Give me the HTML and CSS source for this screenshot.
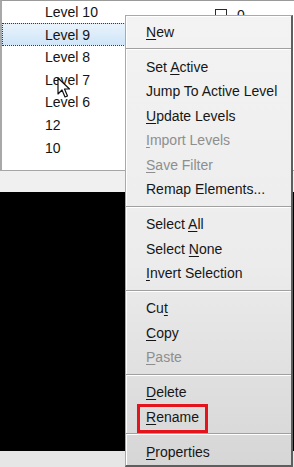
FILE: index.html
```html
<!DOCTYPE html>
<html>
<head>
<meta charset="utf-8">
<link rel="stylesheet" href="styles.css">
</head>
<body>
<div class="screen">
  <div class="list">
    <div class="row"><span class="name">Level 10</span><span class="check"></span><span class="val">0</span></div>
    <div class="row selected"><span class="name">Level 9</span></div>
    <div class="row"><span class="name">Level 8</span></div>
    <div class="row"><span class="name">Level 7</span></div>
    <div class="row"><span class="name">Level 6</span></div>
    <div class="row"><span class="name">12</span></div>
    <div class="row"><span class="name">10</span></div>
  </div>
  <div class="band"></div>
  <div class="canvas"></div>
  <div class="band bottom"></div>

  <ul class="menu">
    <li><u>N</u>ew</li>
    <li class="sep"></li>
    <li>Set <u>A</u>ctive</li>
    <li>Jump To Active Level</li>
    <li><u>U</u>pdate Levels</li>
    <li class="off"><u>I</u>mport Levels</li>
    <li class="off"><u>S</u>ave Filter</li>
    <li>Remap Elements...</li>
    <li class="sep"></li>
    <li>Select <u>A</u>ll</li>
    <li>Select <u>N</u>one</li>
    <li><u>I</u>nvert Selection</li>
    <li class="sep"></li>
    <li>Cu<u>t</u></li>
    <li><u>C</u>opy</li>
    <li class="off"><u>P</u>aste</li>
    <li class="sep"></li>
    <li><u>D</u>elete</li>
    <li class="marked"><u>R</u>ename</li>
    <li class="sep"></li>
    <li><u>P</u>roperties</li>
  </ul>

  <svg class="cursor" width="14" height="22" viewBox="0 0 14 22">
    <path d="M1 1 L1 17 L5 13 L8 20 L10.5 19 L7.5 12 L12.5 12 Z" fill="#fff" stroke="#111" stroke-width="1.2" stroke-linejoin="round"/>
  </svg>
</div>
</body>
</html>
```

FILE: styles.css
```css
html, body {
  margin: 0;
  padding: 0;
  background: #fff;
}

.screen {
  position: relative;
  width: 294px;
  height: 467px;
  overflow: hidden;
  display: flex;
  flex-direction: column;
  font-family: "Liberation Sans", Arial, sans-serif;
  color: #141414;
}

.list {
  height: 171px;
  background: #fff;
  border-top: 1px solid #9a9a9a;
  border-left: 2px solid #a8a8a8;
  box-sizing: border-box;
  border-bottom: 1px solid #a6a6a6;
}

.row {
  height: 22.6px;
  display: flex;
  align-items: center;
  padding-left: 43px;
  font-size: 14px;
  box-sizing: border-box;
  white-space: nowrap;
}

.row:first-child {
  margin-top: -0.3px;
}

.row .name {
  width: 170px;
  flex: none;
}

.row.selected {
  background: linear-gradient(#e9f3fc, #cfe5f8);
  border: 1px dotted #3a3a3a;
  padding-left: 42px;
  margin-right: 60px;
}

.check {
  align-self: flex-start;
  margin-top: 8px;
  width: 10px;
  height: 12px;
  border: 1px solid #2a2a2a;
  flex: none;
  background: #fff;
}

.val {
  margin-left: 10px;
  align-self: flex-start;
  margin-top: 6px;
}

.band {
  height: 21px;
  background: #f0f0f0;
}

.canvas {
  height: 259px;
  background: #000;
}

.band.bottom {
  flex: 1;
  background: #e6e6e6;
}

.menu {
  position: absolute;
  left: 125px;
  top: 15px;
  width: 168px;
  margin: 0;
  padding: 3.5px 0 1px;
  list-style: none;
  box-sizing: border-box;
  background: linear-gradient(#f3f3f3, #ececec 55%, #d6d6d6);
  border-top: 1px solid #a9a9a9;
  border-left: 1px solid #a9a9a9;
  border-right: 2px solid #5e5e5e;
  border-bottom: 2px solid #5e5e5e;
  box-shadow: inset 1px 1px 0 #fff;
  font-size: 14px;
  color: #161616;
}

.menu li {
  height: 24.5px;
  line-height: 24.5px;
  padding-left: 20px;
  white-space: nowrap;
}

.menu li u {
  text-underline-offset: 2px;
}

.menu li.off {
  color: #8e8e8e;
}

.menu li.sep {
  height: 10.5px;
  padding: 0;
  display: flex;
  flex-direction: column;
  justify-content: center;
}

.menu li.sep::before {
  content: "";
  display: block;
  height: 1px;
  background: #a0a0a0;
  border-bottom: 1px solid #fff;
}

.menu li.marked {
  position: relative;
}

.menu li.marked::after {
  content: "";
  position: absolute;
  left: 11px;
  top: -1px;
  width: 71px;
  height: 29px;
  border: 3px solid #e3141c;
  box-sizing: border-box;
}

.cursor {
  position: absolute;
  left: 57px;
  top: 77px;
}
```
